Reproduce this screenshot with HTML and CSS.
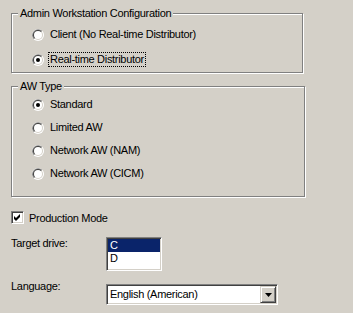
FILE: index.html
```html
<!DOCTYPE html>
<html lang="en">
<head>
    <meta charset="UTF-8">
    <title>AW Setup</title>
    <link rel="stylesheet" href="styles.css">
</head>
<body>
    <div class="page">
        <!-- Admin workstation configuration -->
        <fieldset class="group group-config">
            <legend>Admin Workstation Configuration</legend>
            <div class="radio-row">
                <svg class="radio" width="12" height="12" viewBox="0 0 12 12">
                    <circle cx="6" cy="6" r="6" fill="#fff"/>
                    <path d="M1.76 10.24A6 6 0 0 1 10.24 1.76Z" fill="#808080"/>
                    <circle cx="6" cy="6" r="5" fill="#d4d0c8"/>
                    <path d="M2.46 9.54A5 5 0 0 1 9.54 2.46Z" fill="#404040"/>
                    <circle cx="6" cy="6" r="4" fill="#fff"/>
                </svg>
                <span class="radio-text">Client (No Real-time Distributor)</span>
            </div>
            <div class="radio-row">
                <svg class="radio" width="12" height="12" viewBox="0 0 12 12">
                    <circle cx="6" cy="6" r="6" fill="#fff"/>
                    <path d="M1.76 10.24A6 6 0 0 1 10.24 1.76Z" fill="#808080"/>
                    <circle cx="6" cy="6" r="5" fill="#d4d0c8"/>
                    <path d="M2.46 9.54A5 5 0 0 1 9.54 2.46Z" fill="#404040"/>
                    <circle cx="6" cy="6" r="4" fill="#fff"/>
                    <circle cx="6" cy="6" r="2" fill="#000"/>
                </svg>
                <span class="radio-text focus">Real-time Distributor</span>
            </div>
        </fieldset>

        <!-- AW type -->
        <fieldset class="group group-type">
            <legend>AW Type</legend>
            <div class="radio-row">
                <svg class="radio" width="12" height="12" viewBox="0 0 12 12">
                    <circle cx="6" cy="6" r="6" fill="#fff"/>
                    <path d="M1.76 10.24A6 6 0 0 1 10.24 1.76Z" fill="#808080"/>
                    <circle cx="6" cy="6" r="5" fill="#d4d0c8"/>
                    <path d="M2.46 9.54A5 5 0 0 1 9.54 2.46Z" fill="#404040"/>
                    <circle cx="6" cy="6" r="4" fill="#fff"/>
                    <circle cx="6" cy="6" r="2" fill="#000"/>
                </svg>
                <span class="radio-text">Standard</span>
            </div>
            <div class="radio-row">
                <svg class="radio" width="12" height="12" viewBox="0 0 12 12">
                    <circle cx="6" cy="6" r="6" fill="#fff"/>
                    <path d="M1.76 10.24A6 6 0 0 1 10.24 1.76Z" fill="#808080"/>
                    <circle cx="6" cy="6" r="5" fill="#d4d0c8"/>
                    <path d="M2.46 9.54A5 5 0 0 1 9.54 2.46Z" fill="#404040"/>
                    <circle cx="6" cy="6" r="4" fill="#fff"/>
                </svg>
                <span class="radio-text">Limited AW</span>
            </div>
            <div class="radio-row">
                <svg class="radio" width="12" height="12" viewBox="0 0 12 12">
                    <circle cx="6" cy="6" r="6" fill="#fff"/>
                    <path d="M1.76 10.24A6 6 0 0 1 10.24 1.76Z" fill="#808080"/>
                    <circle cx="6" cy="6" r="5" fill="#d4d0c8"/>
                    <path d="M2.46 9.54A5 5 0 0 1 9.54 2.46Z" fill="#404040"/>
                    <circle cx="6" cy="6" r="4" fill="#fff"/>
                </svg>
                <span class="radio-text">Network AW (NAM)</span>
            </div>
            <div class="radio-row">
                <svg class="radio" width="12" height="12" viewBox="0 0 12 12">
                    <circle cx="6" cy="6" r="6" fill="#fff"/>
                    <path d="M1.76 10.24A6 6 0 0 1 10.24 1.76Z" fill="#808080"/>
                    <circle cx="6" cy="6" r="5" fill="#d4d0c8"/>
                    <path d="M2.46 9.54A5 5 0 0 1 9.54 2.46Z" fill="#404040"/>
                    <circle cx="6" cy="6" r="4" fill="#fff"/>
                </svg>
                <span class="radio-text">Network AW (CICM)</span>
            </div>
        </fieldset>

        <!-- Production mode -->
        <div class="check-row">
            <span class="checkbox">
                <svg width="7" height="7" viewBox="0 0 7 7"><path d="M0 2L2 4L6 0V3L2 7L0 5Z" fill="#000"/></svg>
            </span>
            <span>Production Mode</span>
        </div>

        <div class="field-row">
            <span class="field-label">Target drive:</span>
            <div class="listbox">
                <div class="list-item selected">C</div>
                <div class="list-item">D</div>
            </div>
        </div>

        <div class="field-row">
            <span class="field-label label-up">Language:</span>
            <div class="combo">
                <span class="combo-text">English (American)</span>
                <span class="combo-button">
                    <svg width="7" height="4" viewBox="0 0 7 4"><path d="M0 0H7L3.5 4Z" fill="#000"/></svg>
                </span>
            </div>
        </div>
    </div>
</body>
</html>
```

FILE: styles.css
```css
body {
    margin: 0;
    background-color: #d4d0c8;
    font-family: "Liberation Sans", Arial, sans-serif;
    font-size: 11px;
    letter-spacing: -0.3px;
    color: #000;
}
.page {
    padding: 7px 0 0 11px;
}
.group {
    box-sizing: border-box;
    margin: 0;
    border: 1px solid #808080;
    box-shadow: inset 1px 1px 0 #fff, 1px 1px 0 #fff;
    padding: 2px 0 0 20px;
}
.group legend {
    margin-left: -14px;
    padding: 0 2px;
    line-height: 13px;
    background-color: #d4d0c8;
}
.group-config {
    width: 292px;
}
.group-config .radio-row {
    height: 25px;
}
.group-type {
    width: 294px;
    margin-top: 7px;
    padding-top: 0;
    padding-bottom: 11px;
}
.group-type .radio-row {
    height: 23px;
}
.radio-row {
    display: flex;
    align-items: center;
}
.radio {
    flex: none;
    margin-right: 4px;
}
.radio-text {
    line-height: 13px;
    padding: 0 1px;
    border: 1px solid transparent;
}
.radio-text.focus {
    border: 1px dotted #000;
}
.check-row {
    display: flex;
    align-items: center;
    height: 13px;
    margin-top: 14px;
}
.checkbox {
    box-sizing: border-box;
    width: 13px;
    height: 13px;
    margin-right: 5px;
    display: flex;
    align-items: center;
    justify-content: center;
    background: #fff;
    border: 1px solid;
    border-color: #808080 #fff #fff #808080;
    box-shadow: inset 1px 1px 0 #404040, inset -1px -1px 0 #d4d0c8;
}
.field-row {
    display: grid;
    grid-template-columns: 95px auto;
    align-items: start;
    margin-top: 13px;
}
.field-label {
    line-height: 13px;
}
.label-up {
    margin-top: -4px;
}
.listbox, .combo {
    box-sizing: border-box;
    background: #fff;
    border: 1px solid;
    border-color: #808080 #fff #fff #808080;
    box-shadow: inset 1px 1px 0 #404040, inset -1px -1px 0 #d4d0c8;
    padding: 1px;
}
.listbox {
    width: 56px;
    height: 34px;
}
.list-item {
    height: 13px;
    line-height: 13px;
    padding-left: 2px;
}
.list-item.selected {
    background-color: #0a246a;
    color: #fff;
}
.combo {
    width: 172px;
    height: 21px;
    display: flex;
}
.combo-text {
    flex: 1;
    line-height: 17px;
    padding-left: 2px;
}
.combo-button {
    box-sizing: border-box;
    width: 16px;
    height: 17px;
    display: flex;
    align-items: center;
    justify-content: center;
    padding-top: 1px;
    background-color: #d4d0c8;
    border: 1px solid;
    border-color: #d4d0c8 #404040 #404040 #d4d0c8;
    box-shadow: inset 1px 1px 0 #fff, inset -1px -1px 0 #808080;
}
```
